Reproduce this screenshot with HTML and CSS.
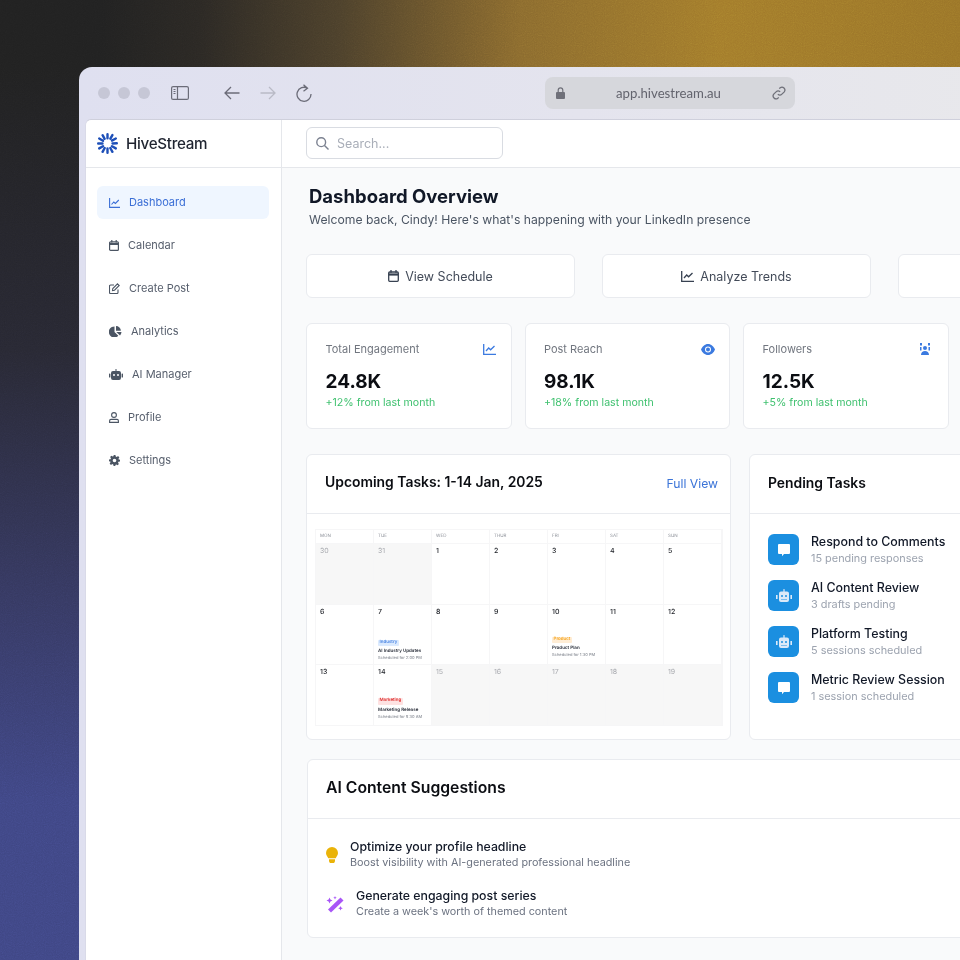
FILE: index.html
```html
<!DOCTYPE html>
<html>
<head>
    <meta charset='utf-8' />
    <title>HiveStream</title>
    <link rel="stylesheet" href="styles.css">
</head>
<body>
<div class='stage'>
    <svg class='grain' width='960' height='960'>
        <filter id='noise'><feTurbulence type='fractalNoise' baseFrequency='0.9' numOctaves='2' /><feColorMatrix type='saturate' values='0' /></filter>
        <rect width='960' height='960' filter='url(#noise)' />
    </svg>

    <div class='window'>
        <div class='toolbar'>
            <div class='dots'><span></span><span></span><span></span></div>
            <svg class='tb-sidebar' width='18' height='14' viewBox='0 0 18 14' fill='none' stroke='#6b6c78' stroke-width='1.2'>
                <rect x='.6' y='.6' width='16.8' height='12.8' rx='1.5' />
                <path d='M6.5 .6v12.8M2.5 3.5h2M2.5 5.5h2M2.5 7.5h2' />
            </svg>
            <svg class='tb-arrow' width='16' height='14' viewBox='0 0 16 14' fill='none' stroke='#6b6c78' stroke-width='1.3'><path d='M15.5 7H1M7 1 1 7l6 6' /></svg>
            <svg class='tb-arrow' width='16' height='14' viewBox='0 0 16 14' fill='none' stroke='#b9bac6' stroke-width='1.3'><path d='M.5 7H15M9 1l6 6-6 6' /></svg>
            <svg class='tb-arrow' width='16' height='18' viewBox='0 0 16 18' fill='none' stroke='#6b6c78' stroke-width='1.3'><path d='M11.5 4.2A7 7 0 1 0 15 10M7.5 .7l4 3.5-4 3' /></svg>
            <div class='urlbar'>
                <svg width='9' height='12' viewBox='0 0 9 12'><path fill='#6f7079' d='M1 5h7a1 1 0 0 1 1 1v5a1 1 0 0 1-1 1H1a1 1 0 0 1-1-1V6a1 1 0 0 1 1-1z' /><path fill='none' stroke='#6f7079' stroke-width='1.2' d='M2.2 5V3.2a2.3 2.3 0 0 1 4.600 0V5' /></svg>
                <span class='url'>app.hivestream.au</span>
                <svg width='14' height='14' viewBox='0 0 24 24' fill='none' stroke='#6f7079' stroke-width='2.2'><path d='M10 14a5 5 0 0 0 7 0l4-4a5 5 0 0 0-7-7l-1.500 1.500' /><path d='M14 10a5 5 0 0 0-7 0l-4 4a5 5 0 0 0 7 7l1.500-1.500' /></svg>
            </div>
        </div>

        <div class='app'>
            <div class='sidebar'>
                <div class='brand'>
                    <svg width='21' height='21' viewBox='0 0 21 21' stroke='#1d4fb8' stroke-width='2.4' stroke-linecap='round'>
                        <path d='M10.500 1.200v4M15.400 2.100l-2 3.600M18.800 5.500l-3.800 2.100M19.800 10.300l-4.300.2M18.800 15.400l-3.800-2.200M15.400 18.800l-2.100-3.800M10.500 19.800v-4.300M5.600 18.800l2.100-3.800M2.200 15.400l3.800-2.200M1.200 10.500h4.300M2.200 5.500l3.800 2.300M5.600 2.200l2 3.600' />
                    </svg>
                    <span>HiveStream</span>
                </div>
                <div class='nav'>
                    <div class='nav-item active'>
                        <svg width='11' height='10' viewBox='0 0 11 10' fill='none' stroke='#3b6fd6' stroke-width='1.100'><path d='M.6 0v9.400H11M2.500 6.500 4.800 4l1.600 1.500L9.800 2' /></svg>
                        <span>Dashboard</span>
                    </div>
                    <div class='nav-item'>
                        <svg width='10' height='11' viewBox='0 0 10 11' fill='none' stroke='#4b5563' stroke-width='1.200'><rect x='.6' y='1.800' width='8.800' height='8.600' rx='1' /><path d='M.6 4h8.800' stroke-width='2' /><path d='M2.800 0v2.500M7.200 0v2.500' /></svg>
                        <span>Calendar</span>
                    </div>
                    <div class='nav-item'>
                        <svg width='11' height='11' viewBox='0 0 11 11' fill='none' stroke='#4b5563' stroke-width='1.100'><path d='M9 6.500v3a1 1 0 0 1-1 1H1.500a1 1 0 0 1-1-1V3a1 1 0 0 1 1-1H5' /><path d='M8.500.8 10.200 2.500 5.500 7.200 3.500 7.500l.3-2z' /></svg>
                        <span>Create Post</span>
                    </div>
                    <div class='nav-item'>
                        <svg width='13' height='11' viewBox='0 0 13 11' fill='#4b5563'><path d='M5.500 .5V6l3.800 3.800A5.500 5.500 0 1 1 5.500 .5z' /><path d='M7 0a5 5 0 0 1 4.900 4.800H7z' /><path d='M7.300 6h5.200a5 5 0 0 1-1.500 3.400z' /></svg>
                        <span>Analytics</span>
                    </div>
                    <div class='nav-item'>
                        <svg width='14' height='11' viewBox='0 0 14 11' fill='#4b5563'><path d='M7 0a.7.7 0 0 1 .5 1.200V2H10a2 2 0 0 1 2 2v5a2 2 0 0 1-2 2H4a2 2 0 0 1-2-2V4a2 2 0 0 1 2-2h2.500v-.8A.7.7 0 0 1 7 0z' /><rect x='0' y='4.500' width='1.400' height='4' rx='.6' /><rect x='12.600' y='4.500' width='1.400' height='4' rx='.6' /><circle cx='5' cy='6' r='1' fill='#fff' /><circle cx='9' cy='6' r='1' fill='#fff' /></svg>
                        <span>AI Manager</span>
                    </div>
                    <div class='nav-item'>
                        <svg width='10' height='11' viewBox='0 0 10 11' fill='none' stroke='#4b5563' stroke-width='1.100'><circle cx='5' cy='3' r='2.400' /><path d='M.6 10.400V8.800a1.400 1.400 0 0 1 1.400-1.400h6a1.400 1.400 0 0 1 1.400 1.400v1.600z' /></svg>
                        <span>Profile</span>
                    </div>
                    <div class='nav-item'>
                        <svg width='11' height='11' viewBox='0 0 24 24' fill='#4b5563'><path fill-rule='evenodd' d='M10 0h4l.8 3.400 2 .9 3-1.900 2.800 2.800-1.900 3 .9 2L24 10v4l-3.400.8-.9 2 1.900 3-2.800 2.800-3-1.900-2 .9L14 24h-4l-.8-3.400-2-.9-3 1.900-2.800-2.800 1.900-3-.9-2L0 14v-4l3.400-.8.9-2-1.900-3 2.800-2.800 3 1.900 2-.9zM12 8a4 4 0 1 0 0 8 4 4 0 0 0 0-8z' /></svg>
                        <span>Settings</span>
                    </div>
                </div>
            </div>

            <div class='content'>
                <div class='topbar'>
                    <div class='search'>
                        <svg width='13' height='13' viewBox='0 0 13 13' fill='none' stroke='#7b8190' stroke-width='1.400'><circle cx='5.200' cy='5.200' r='4.400' /><path d='m8.500 8.500 4 4' /></svg>
                        <span>Search...</span>
                    </div>
                </div>
                <div class='main'>
                    <div class='page-head'>
                        <h1>Dashboard Overview</h1>
                        <p>Welcome back, Cindy! Here's what's happening with your LinkedIn presence</p>
                    </div>

                    <div class='actions'>
                        <div class='action'>
                            <svg width='11' height='12' viewBox='0 0 11 12' fill='none' stroke='#374151' stroke-width='1.300'><rect x='.7' y='2' width='9.600' height='9.300' rx='1' /><path d='M.7 4.500h9.600' stroke-width='2.200' /><path d='M3 0v2.700M8 0v2.700' /></svg>
                            <span>View Schedule</span>
                        </div>
                        <div class='action'>
                            <svg width='13' height='11' viewBox='0 0 13 11' fill='none' stroke='#374151' stroke-width='1.300'><path d='M.7 0v10.300H13M3 7l2.700-3 1.900 1.800L11.500 2' /></svg>
                            <span>Analyze Trends</span>
                        </div>
                        <div class='action'></div>
                    </div>

                    <div class='stats'>
                        <div class='stat'>
                            <div class='stat-top'>
                                <span>Total Engagement</span>
                                <svg width='13' height='11' viewBox='0 0 13 11' fill='none' stroke='#3b7ae0' stroke-width='1.300'><path d='M.7 0v10.300H13M3 7l2.700-3 1.900 1.800L11.500 2' /></svg>
                            </div>
                            <div class='stat-value'>24.8K</div>
                            <div class='stat-note'>+12% from last month</div>
                        </div>
                        <div class='stat'>
                            <div class='stat-top'>
                                <span>Post Reach</span>
                                <svg class='icon-eye' width='14' height='11' viewBox='0 0 14 11'><path fill='#3b7ae0' d='M7 0c3.200 0 5.800 2.500 7 5.500-1.200 3-3.800 5.500-7 5.500S1.200 8.500 0 5.500C1.200 2.500 3.800 0 7 0z' /><circle cx='7' cy='5.500' r='3' fill='#fff' /><circle cx='7' cy='5.500' r='2' fill='#3b7ae0' /></svg>
                            </div>
                            <div class='stat-value'>98.1K</div>
                            <div class='stat-note'>+18% from last month</div>
                        </div>
                        <div class='stat'>
                            <div class='stat-top'>
                                <span>Followers</span>
                                <svg class='icon-team' width='10' height='12' viewBox='0 0 10 12' fill='#3b7ae0'><circle cx='5' cy='5' r='2' /><path d='M1 12c0-2.500 1.800-4 4-4s4 1.500 4 4zM0 0h2v2.500H0zM8 0h2v2.500H8zM0 4h1.500v3.500H0zM8.500 4H10v3.500H8.500z' /></svg>
                            </div>
                            <div class='stat-value'>12.5K</div>
                            <div class='stat-note'>+5% from last month</div>
                        </div>
                    </div>

                    <div class='panels'>
                        <div class='card tasks-card'>
                            <div class='card-head'>
                                <h2>Upcoming Tasks: 1-14 Jan, 2025</h2>
                                <a>Full View</a>
                            </div>
                            <div class='calendar'>
                                <div class='dow'>MON</div><div class='dow'>TUE</div><div class='dow'>WED</div><div class='dow'>THUR</div><div class='dow'>FRI</div><div class='dow'>SAT</div><div class='dow'>SUN</div>
                                <div class='day off'>30</div><div class='day off'>31</div><div class='day'>1</div><div class='day'>2</div><div class='day'>3</div><div class='day'>4</div><div class='day'>5</div>
                                <div class='day'>6</div>
                                <div class='day'>7
                                    <div class='event ev-industry'><span class='tag blue'>Industry</span><b>AI Industry Updates</b><i>Scheduled for 2:00 PM</i></div>
                                </div>
                                <div class='day'>8</div><div class='day'>9</div>
                                <div class='day'>10
                                    <div class='event ev-product'><span class='tag orange'>Product</span><b>Product Plan</b><i>Scheduled for 1:30 PM</i></div>
                                </div>
                                <div class='day'>11</div><div class='day'>12</div>
                                <div class='day'>13</div>
                                <div class='day'>14
                                    <div class='event ev-marketing'><span class='tag red'>Marketing</span><b>Marketing Release</b><i>Scheduled for 9:30 AM</i></div>
                                </div>
                                <div class='day off'>15</div><div class='day off'>16</div><div class='day off'>17</div><div class='day off'>18</div><div class='day off'>19</div>
                            </div>
                        </div>

                        <div class='card pending-card'>
                            <div class='card-head'><h2>Pending Tasks</h2></div>
                            <div class='pending'>
                                <div class='pending-item'>
                                    <div class='pending-icon'><svg width='14' height='14' viewBox='0 0 14 14' fill='#fff'><path d='M2 1h10a1 1 0 0 1 1 1v8a1 1 0 0 1-1 1H7l-2 2.200V11H2a1 1 0 0 1-1-1V2a1 1 0 0 1 1-1z' /></svg></div>
                                    <div><div class='p-title'>Respond to Comments</div><div class='p-sub'>15 pending responses</div></div>
                                </div>
                                <div class='pending-item'>
                                    <div class='pending-icon'><svg width='16' height='13' viewBox='0 0 16 13'><path fill='#dbe9f8' d='M8 0a.8.8 0 0 1 .6 1.300V2.500H11a2 2 0 0 1 2 2V11a2 2 0 0 1-2 2H5a2 2 0 0 1-2-2V4.500a2 2 0 0 1 2-2h2.400V1.300A.8.8 0 0 1 8 0zM0 6h1.600v4H0zM14.400 6H16v4h-1.600z' /><circle cx='6' cy='7' r='1' fill='#1b8fe0' /><circle cx='10' cy='7' r='1' fill='#1b8fe0' /><path stroke='#1b8fe0' d='M5.500 10.500h5' stroke-dasharray='1 1' /></svg></div>
                                    <div><div class='p-title'>AI Content Review</div><div class='p-sub'>3 drafts pending</div></div>
                                </div>
                                <div class='pending-item'>
                                    <div class='pending-icon'><svg width='16' height='13' viewBox='0 0 16 13'><path fill='#dbe9f8' d='M8 0a.8.8 0 0 1 .6 1.300V2.500H11a2 2 0 0 1 2 2V11a2 2 0 0 1-2 2H5a2 2 0 0 1-2-2V4.500a2 2 0 0 1 2-2h2.400V1.300A.8.8 0 0 1 8 0zM0 6h1.600v4H0zM14.400 6H16v4h-1.600z' /><circle cx='6' cy='7' r='1' fill='#1b8fe0' /><circle cx='10' cy='7' r='1' fill='#1b8fe0' /><path stroke='#1b8fe0' d='M5.500 10.500h5' stroke-dasharray='1 1' /></svg></div>
                                    <div><div class='p-title'>Platform Testing</div><div class='p-sub'>5 sessions scheduled</div></div>
                                </div>
                                <div class='pending-item'>
                                    <div class='pending-icon'><svg width='14' height='14' viewBox='0 0 14 14' fill='#fff'><path d='M2 1h10a1 1 0 0 1 1 1v8a1 1 0 0 1-1 1H7l-2 2.200V11H2a1 1 0 0 1-1-1V2a1 1 0 0 1 1-1z' /></svg></div>
                                    <div><div class='p-title'>Metric Review Session</div><div class='p-sub'>1 session scheduled</div></div>
                                </div>
                            </div>
                        </div>
                    </div>

                    <div class='card ai-card'>
                        <div class='card-head'><h2>AI Content Suggestions</h2></div>
                        <div class='suggestions'>
                            <div class='suggestion'>
                                <svg width='12' height='16' viewBox='0 0 12 16' fill='#eab308'><path d='M6 0a6 6 0 0 1 6 6c0 2.200-1.500 3.500-2.300 5.200H2.300C1.500 9.500 0 8.200 0 6a6 6 0 0 1 6-6z' /><path d='M3 12.300h6v1.200a2.500 2.500 0 0 1-6 0z' /></svg>
                                <div><div class='s-title'>Optimize your profile headline</div><div class='s-sub'>Boost visibility with AI-generated professional headline</div></div>
                            </div>
                            <div class='suggestion'>
                                <svg width='18' height='17' viewBox='0 0 18 17' fill='#a855f7'><path d='M14.500 1.500 17.500 4.500 5 16.500 2 13.500z' /><path d='M3.500 1.500l.9 2.100 2.100.9-2.100.9-.9 2.100-.9-2.100L.5 4.500l2.100-.9zM9 0l.5 1.200 1.200.5-1.200.5L9 3.400l-.5-1.200-1.200-.5 1.200-.5zM14.500 10l.7 1.600 1.600.7-1.600.7-.7 1.600-.7-1.600-1.600-.7 1.600-.7z' /></svg>
                                <div><div class='s-title'>Generate engaging post series</div><div class='s-sub'>Create a week's worth of themed content</div></div>
                            </div>
                        </div>
                    </div>
                </div>
            </div>
        </div>
    </div>
</div>
</body>
</html>
```

FILE: styles.css
```css
* {
    box-sizing: border-box;
}

body {
    margin: 0;
    font-family: 'Inter', 'Liberation Sans', sans-serif;
    color: #111827;
}

.stage {
    position: relative;
    width: 960px;
    height: 960px;
    overflow: hidden;
    padding: 67px 0 0 79px;
    background:
        linear-gradient(90deg, #212121 0, #212121 100px, #2b2824 200px, #4c402b 340px, #8a6a2e 520px, #a37b2b 720px, #9a7428 960px) top / 960px 67px no-repeat,
        linear-gradient(180deg, #212121 67px, #282833 350px, #363962 600px, #3f4684 800px, #3f4684 960px);
}

.grain {
    position: absolute;
    left: 0;
    top: 0;
    opacity: 0.22;
    mix-blend-mode: overlay;
}

.window {
    position: relative;
    width: 1000px;
    height: 1000px;
    border-radius: 13px 0 0 0;
    background: linear-gradient(90deg, #dfe0f0 0%, #e4e4ee 50%, #e9e9eb 100%);
    padding-left: 6px;
    display: flex;
    flex-direction: column;
}

.toolbar {
    height: 52px;
    flex: none;
    display: flex;
    align-items: center;
    margin-left: -6px;
    padding: 0 0 0 19px;
}

.dots {
    display: flex;
    gap: 8px;
}

.dots span {
    width: 12px;
    height: 12px;
    border-radius: 50%;
    background: #c6c7d6;
}

.tb-sidebar {
    margin: 0 35px 0 21px;
}

.tb-arrow {
    margin-right: 20px;
}

.urlbar {
    width: 250px;
    height: 32px;
    margin-left: 213px;
    border-radius: 8px;
    background: #d6d7dc;
    display: flex;
    align-items: center;
    justify-content: space-between;
    padding: 0 9px 0 11px;
}

.url {
    font-family: 'Lato', sans-serif;
    font-size: 13.2px;
    color: #63646e;
}

.app {
    flex: 1;
    display: flex;
    background: #fff;
    border-radius: 6px 0 0 0;
    border-top: 1px solid #cfd0dc;
    border-left: 1px solid #d9dae8;
    overflow: hidden;
}

.sidebar {
    width: 196px;
    flex: none;
    border-right: 1px solid #e5e7eb;
}

.brand {
    height: 48px;
    display: flex;
    align-items: center;
    gap: 8px;
    padding-left: 11px;
    border-bottom: 1px solid #e5e7eb;
    font-size: 15.2px;
    font-weight: 500;
    letter-spacing: -0.3px;
    color: #1f2430;
}

.nav {
    display: flex;
    flex-direction: column;
    gap: 10px;
    padding: 18px 12px 0 11px;
}

.nav-item {
    height: 33px;
    border-radius: 6px;
    display: flex;
    align-items: center;
    gap: 9px;
    padding-left: 12px;
    font-size: 11px;
    color: #565e6c;
}

.nav-item span {
    margin-top: -2px;
}

.nav-item.active {
    background: #eff6ff;
    color: #3b6fd6;
}

.content {
    flex: 1;
    min-width: 0;
    display: flex;
    flex-direction: column;
}

.topbar {
    height: 48px;
    flex: none;
    padding: 7px 0 0 24px;
    border-bottom: 1px solid #e5e7eb;
}

.search {
    width: 197px;
    height: 32px;
    border: 1px solid #d9dce2;
    border-radius: 6px;
    display: flex;
    align-items: center;
    gap: 8px;
    padding-left: 9px;
    font-size: 12.5px;
    color: #a9aeb8;
}

.main {
    flex: 1;
    background: #f9fafb;
    padding: 17px 0 0 24px;
}

.page-head {
    padding-left: 3px;
}

h1 {
    margin: 0;
    font-size: 18.5px;
    line-height: 22px;
    font-weight: 700;
    color: #111827;
}

.page-head p {
    margin: 5px 0 0;
    font-size: 12.2px;
    line-height: 16px;
    color: #4b5563;
}

.actions {
    display: flex;
    gap: 27px;
    margin-top: 26px;
}

.action {
    width: 269px;
    height: 44px;
    flex: none;
    background: #fff;
    border: 1px solid #e9ebef;
    border-radius: 6px;
    display: flex;
    align-items: center;
    justify-content: center;
    gap: 6px;
    font-size: 12.5px;
    color: #434b59;
}

.stats {
    display: flex;
    gap: 13px;
    margin-top: 25px;
}

.stat {
    width: 205.5px;
    height: 106px;
    flex: none;
    background: #fff;
    border: 1px solid #e9ebef;
    border-radius: 6px;
    padding: 18px 15px 0 18.5px;
}

.stat-top {
    display: flex;
    justify-content: space-between;
    align-items: center;
    height: 14px;
    font-size: 11px;
    color: #71767f;
}

.icon-eye {
    margin-right: -1px;
}

.icon-team {
    margin-right: 3px;
}

.stat-value {
    margin-top: 14px;
    font-size: 19px;
    line-height: 24px;
    font-weight: 700;
    color: #0b0d12;
}

.stat-note {
    margin-top: 2px;
    font-size: 10.6px;
    line-height: 14px;
    color: #3fc16f;
}

.panels {
    display: flex;
    gap: 18px;
    margin-top: 25px;
}

.card {
    background: #fff;
    border: 1px solid #e9ebef;
    border-radius: 6px;
    flex: none;
}

.tasks-card {
    width: 425px;
    height: 286px;
}

.pending-card {
    width: 300px;
    height: 286px;
}

.card-head {
    height: 59px;
    border-bottom: 1px solid #e9ebef;
    display: flex;
    align-items: center;
    justify-content: space-between;
    padding: 0 12px 0 18px;
}

.card-head h2 {
    margin: 0;
    font-size: 13.9px;
    font-weight: 600;
    color: #0b0d12;
}

.tasks-card h2 {
    padding-bottom: 5px;
}

.pending-card h2 {
    padding-bottom: 3px;
}

.card-head a {
    padding-bottom: 1px;
    font-size: 12.2px;
    color: #3b74d8;
}

.calendar {
    margin: 15px 0 0 8px;
    width: 408px;
    display: grid;
    grid-template-columns: repeat(7, 1fr);
    grid-template-rows: 13px repeat(3, 60.5px);
    border: 1px solid #f6f6f7;
    text-rendering: geometricPrecision;
    filter: blur(0.3px);
}

.dow {
    font-size: 4.5px;
    line-height: 13px;
    padding-left: 4px;
    color: #8f939b;
    border-right: 1px solid #f6f6f7;
}

.day {
    position: relative;
    font-size: 7px;
    line-height: 8px;
    font-weight: 500;
    padding: 3px 4px 0;
    color: #23262c;
    border-top: 1px solid #f6f6f7;
    border-right: 1px solid #f6f6f7;
}

.day.off {
    background: #f7f7f7;
    color: #a9abb0;
    font-weight: 400;
}

.event {
    display: flex;
    flex-direction: column;
    align-items: flex-start;
}

.ev-industry {
    margin-top: 24px;
}

.ev-product {
    margin-top: 21px;
}

.ev-marketing {
    margin-top: 22px;
}

.tag {
    font-size: 4.5px;
    line-height: 6.5px;
    padding: 0 1.5px;
    border-radius: 1px;
}

.tag.blue {
    background: #dbeafe;
    color: #3b7ae0;
}

.tag.orange {
    background: #ffedd5;
    color: #f59e0b;
}

.tag.red {
    background: #fee2e2;
    color: #dc2626;
}

.event b {
    font-size: 4.5px;
    line-height: 6px;
    margin-top: 3px;
    font-weight: 600;
    color: #1f2430;
}

.event i {
    font-size: 4px;
    line-height: 5px;
    font-style: normal;
    color: #8f939b;
}

.pending {
    display: flex;
    flex-direction: column;
    gap: 15px;
    padding: 20px 0 0 18px;
}

.pending-item {
    display: flex;
    align-items: center;
    gap: 12px;
    height: 31px;
}

.pending-icon {
    width: 31px;
    height: 31px;
    flex: none;
    border-radius: 6px;
    background: #1b8fe0;
    display: flex;
    align-items: center;
    justify-content: center;
}

.p-title {
    font-size: 12.4px;
    line-height: 16px;
    font-weight: 500;
    color: #111827;
}

.p-sub {
    margin-top: 1px;
    font-size: 10.9px;
    line-height: 14px;
    color: #9ca3af;
}

.ai-card {
    width: 760px;
    height: 179px;
    margin-top: 19px;
    margin-left: 1px;
}

.ai-card h2 {
    padding-bottom: 3px;
    font-size: 15.75px;
}

.suggestions {
    display: flex;
    flex-direction: column;
    gap: 17px;
    padding: 20px 0 0 18px;
}

.suggestion {
    display: flex;
    align-items: center;
    gap: 12px;
}

.s-title {
    font-size: 12.3px;
    line-height: 16px;
    font-weight: 500;
    color: #111827;
}

.s-sub {
    font-size: 10.8px;
    line-height: 16px;
    color: #6b7280;
}
```
